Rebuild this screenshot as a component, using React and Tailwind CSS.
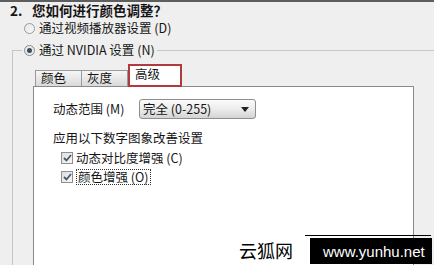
export default function App() {
  const cjk = "font-['Noto_Sans_CJK_SC','Noto_Sans',sans-serif]";
  return (
    <div className={`relative w-[434px] h-[265px] overflow-hidden bg-[#efefef] border-t-2 border-[#5e5e5e] text-[12.5px] leading-none text-[#151515] ${cjk}`}>
      <div className="h-[18px] flex items-center pl-[10px] font-bold text-[13.5px]">
        <span className="w-[22px]">2.</span>
        <span>您如何进行颜色调整？</span>
      </div>
      <div className="h-[16px] flex items-center pl-[24px] gap-[4px]">
        <div className="w-[11px] h-[11px] rounded-full border border-[#9a9a9a] bg-gradient-to-br from-[#e6e6e6] to-[#fafafa]" />
        <span>通过视频播放器设置 (D)</span>
      </div>
      <fieldset className="mt-[7px] ml-[12px] h-[260px] border-l border-t border-[#c6c6c6] pl-[20px]">
        <legend className="-ml-[11px] px-[2px] h-[14px]">
          <span className="flex items-center gap-[4px] h-[14px]">
            <span className="w-[11px] h-[11px] rounded-full border border-[#8a8a8a] bg-[#eaeaea] flex items-center justify-center">
              <span className="w-[5px] h-[5px] rounded-full bg-[#3d4d5e]" />
            </span>
            <span>通过 NVIDIA 设置 (N)</span>
          </span>
        </legend>
        <div className="mt-[7px] h-[22px] flex items-end pl-[2px]">
          <div className="w-[47px] h-[16px] border border-b-0 border-[#9a9a9a] bg-gradient-to-b from-[#f6f6f6] to-[#dadada] pl-[5px] flex items-center">颜色</div>
          <div className="w-[46px] h-[16px] border border-l-0 border-b-0 border-[#9a9a9a] bg-gradient-to-b from-[#f6f6f6] to-[#dadada] pl-[5px] flex items-center">灰度</div>
          <div className="relative z-10 -mb-[1px] w-[54px] h-[23px] border-2 border-[#b03a3c] bg-white pl-[5px] pb-[3px] flex items-center">高级</div>
        </div>
        <div className="w-[381px] h-[200px] border border-[#8a8a8a] bg-white pl-[19px] pt-[12px]">
          <div className="flex items-center h-[20px]">
            <span className="w-[86px]">动态范围 (M)</span>
            <div className="w-[117px] h-[20px] border border-[#8e8e8e] rounded-[3px] bg-gradient-to-b from-[#fbfbfb] via-[#ececec] to-[#d4d4d4] flex items-center justify-between pl-[3px] pr-[6px]">
              <span>完全 (0-255)</span>
              <svg width="8" height="5" viewBox="0 0 8 5"><path d="M0 0H8L4 5Z" fill="#222" /></svg>
            </div>
          </div>
          <div className="mt-[12px] h-[14px] flex items-center">应用以下数字图象改善设置</div>
          <div className="mt-[4px] flex flex-col gap-[1px] pl-[8px]">
            <div className="h-[18px] flex items-center gap-[3px]">
              <Check />
              <span>动态对比度增强 (C)</span>
            </div>
            <div className="h-[18px] flex items-center gap-[3px]">
              <Check />
              <span className="border border-dotted border-[#333] px-[1px] py-[1px]">颜色增强 (O)</span>
            </div>
          </div>
        </div>
      </fieldset>

      <div className="absolute left-[239px] top-[239px] text-[18px] text-black leading-none">云狐网</div>
      <div className="absolute left-[305px] top-[233px] w-[126px] h-[1px] bg-black" />
      <div className="absolute left-[310px] top-[236px] w-[122px] h-[26px] bg-black text-white text-[15px] font-['Liberation_Sans',sans-serif] flex items-center pl-[13px]">www.yunhu.net</div>
    </div>
  );
}

function Check() {
  return (
    <span className="w-[12px] h-[12px] border border-[#8f8f8f] bg-gradient-to-br from-[#dedede] to-[#f8f8f8] flex items-center justify-center">
      <svg width="9" height="8" viewBox="0 0 9 8">
        <path d="M1 4L3.5 6.5L8 1" stroke="#4a5868" strokeWidth="1.8" fill="none" />
      </svg>
    </span>
  );
}
